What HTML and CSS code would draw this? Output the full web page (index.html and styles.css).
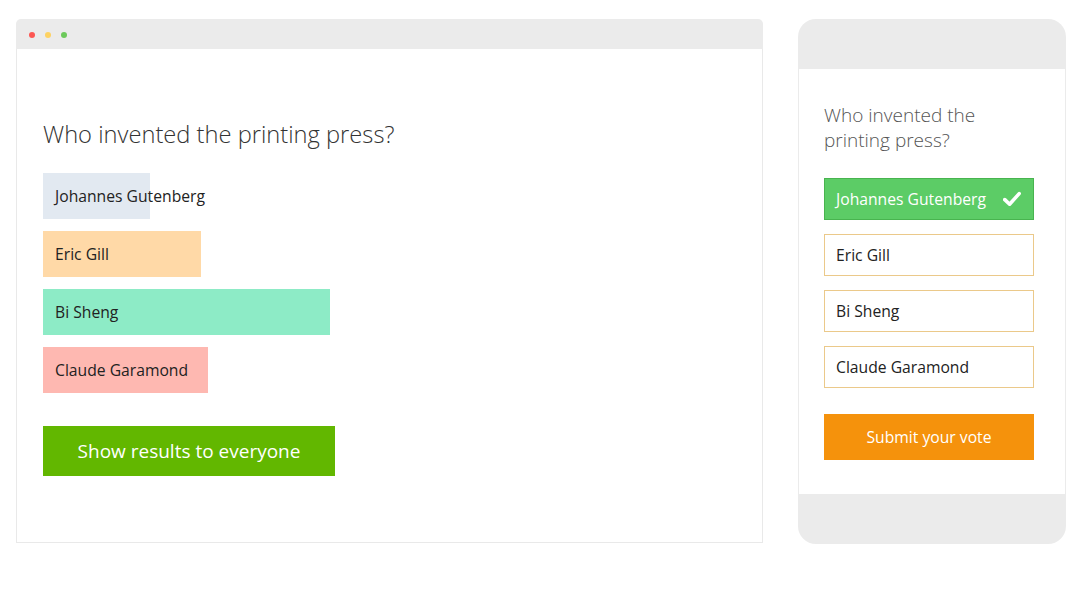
FILE: index.html
```html
<!DOCTYPE html>
<html>
<head>
<meta charset="utf-8">
<link rel="stylesheet" href="styles.css">
</head>
<body>
<div class="stage">
  <div class="browser">
    <div class="titlebar">
      <span class="dot red"></span>
      <span class="dot yellow"></span>
      <span class="dot green"></span>
    </div>
    <div class="browser-body">
      <h1 class="question">Who invented the printing press?</h1>
      <div class="results">
        <div class="result"><div class="bar bar-blue" style="width:107px"></div><span class="label">Johannes Gutenberg</span></div>
        <div class="result"><div class="bar bar-orange" style="width:158px"></div><span class="label">Eric Gill</span></div>
        <div class="result"><div class="bar bar-mint" style="width:287px"></div><span class="label">Bi Sheng</span></div>
        <div class="result"><div class="bar bar-pink" style="width:165px"></div><span class="label">Claude Garamond</span></div>
      </div>
      <button class="show-btn">Show results to everyone</button>
    </div>
  </div>
  <div class="phone">
    <div class="screen">
      <h2 class="m-question">Who invented the printing press?</h2>
      <div class="options">
        <div class="option selected"><span>Johannes Gutenberg</span>
          <svg class="check" width="18" height="16" viewBox="0 0 18 16"><path d="M1.8 8.6 L6.6 13.2 L16.2 2.6" fill="none" stroke="#fff" stroke-width="3.6" stroke-linecap="round" stroke-linejoin="round"/></svg>
        </div>
        <div class="option"><span>Eric Gill</span></div>
        <div class="option"><span>Bi Sheng</span></div>
        <div class="option"><span>Claude Garamond</span></div>
      </div>
      <button class="submit-btn">Submit your vote</button>
    </div>
  </div>
</div>
</body>
</html>
```

FILE: styles.css
```css
* { box-sizing: border-box; }
html, body { margin: 0; padding: 0; background: #fff; }
body { font-family: "Open Sans", "Noto Sans", sans-serif; color: #222; }

.stage {
  display: flex;
  gap: 35px;
  padding: 19px 0 0 16px;
}

.browser {
  width: 747px;
  display: flex;
  flex-direction: column;
}
.titlebar {
  height: 30px;
  background: #ebebeb;
  border-radius: 5px 5px 0 0;
  display: flex;
  align-items: center;
  gap: 10px;
  padding-left: 13px;
  padding-top: 1px;
}
.dot { width: 6px; height: 6px; border-radius: 50%; display: block; }
.red { background: #fc5753; }
.yellow { background: #fdd262; }
.green { background: #6cc95b; }

.browser-body {
  height: 494px;
  border: 1px solid #e9e9e9;
  border-top: none;
  padding: 69px 26px 0 26px;
}
.question {
  margin: 0 0 23px 0;
  font-size: 23.7px;
  font-weight: 300;
  line-height: 32px;
  color: #333;
}
.results { display: flex; flex-direction: column; gap: 12px; }
.result {
  position: relative;
  height: 46px;
  display: flex;
  align-items: center;
}
.bar { position: absolute; left: 0; top: 0; bottom: 0; }
.bar-blue { background: #e2e9f1; }
.bar-orange { background: #ffd9a7; }
.bar-mint { background: #8debc6; }
.bar-pink { background: #feb8b1; }
.label {
  position: relative;
  padding-left: 12px;
  font-size: 15.7px;
  color: #222;
}
.show-btn {
  margin-top: 33px;
  width: 292px;
  height: 50px;
  border: none;
  background: #62b700;
  color: #fff;
  font-family: inherit;
  font-size: 19px;
  display: block;
  padding: 0;
}

.phone {
  width: 268px;
  height: 525px;
  background: #ebebeb;
  border-radius: 18px;
  padding: 50px 1px;
}
.screen {
  height: 425px;
  background: #fff;
  padding: 34px 31px 0 25px;
}
.m-question {
  margin: 0 0 25px 0;
  font-size: 19px;
  font-weight: 300;
  line-height: 25px;
  color: #555;
  width: 180px;
}
.options { display: flex; flex-direction: column; gap: 14px; }
.option {
  height: 42px;
  border: 1px solid #ebc98a;
  display: flex;
  align-items: center;
  justify-content: space-between;
  padding: 0 12px 0 11px;
  font-size: 15.7px;
  color: #222;
}
.option.selected {
  background: #5ccc66;
  border-color: #48b44f;
  color: #fff;
}
.check { display: block; }
.submit-btn {
  margin-top: 26px;
  width: 100%;
  height: 46px;
  border: none;
  background: #f5920c;
  color: #fff;
  font-family: inherit;
  font-size: 15.7px;
  padding: 0;
  display: block;
}
```
